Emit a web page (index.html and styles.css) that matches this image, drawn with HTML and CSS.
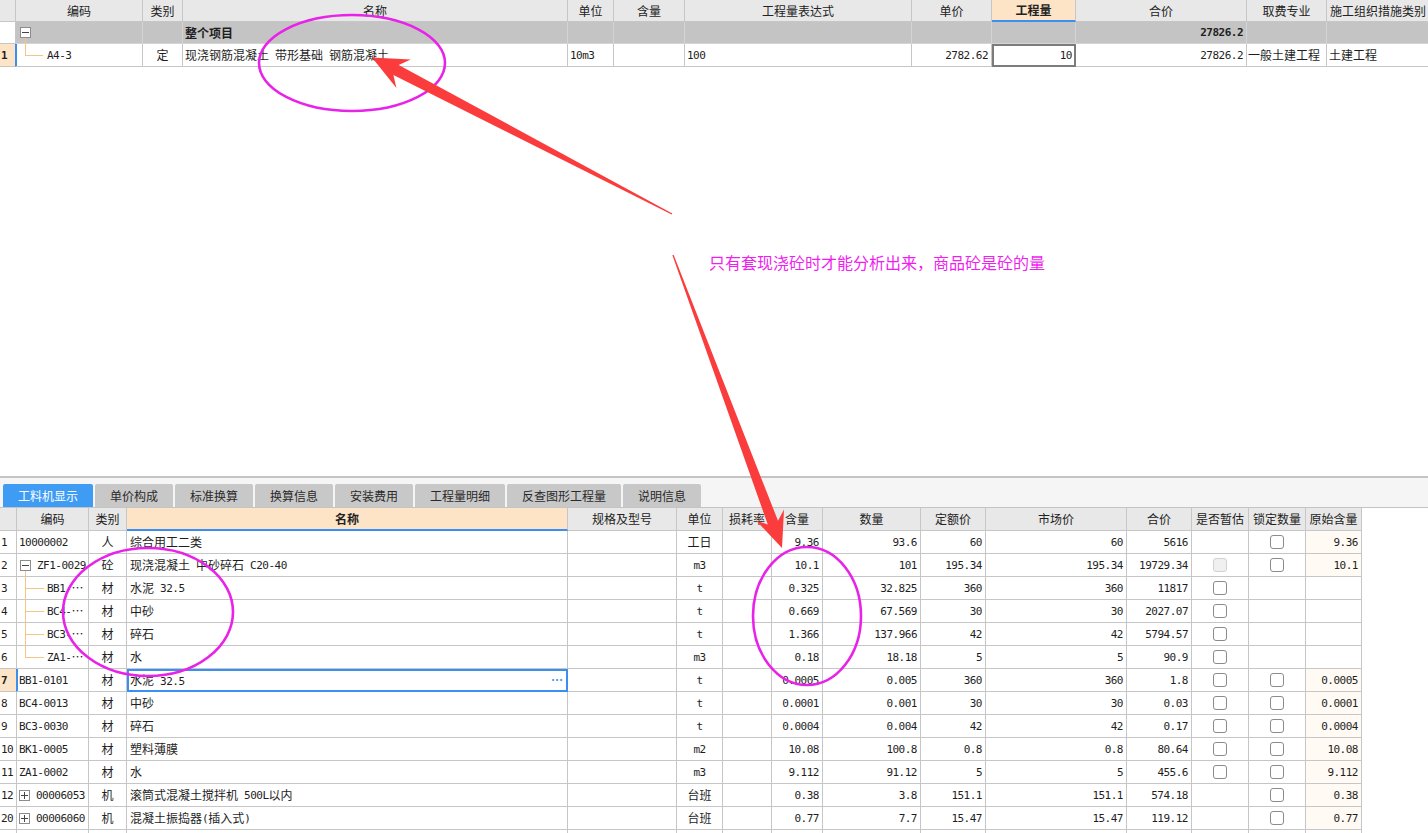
FILE: index.html
```html
<!DOCTYPE html>
<html lang="zh-CN">
<head>
<meta charset="utf-8">
<title>工料机显示</title>
<link rel="stylesheet" href="styles.css">
</head>
<body>
<div class="top">
  <div class="row trow thead">
    <div class="c"></div>
    <div class="c">编码</div>
    <div class="c">类别</div>
    <div class="c">名称</div>
    <div class="c">单位</div>
    <div class="c">含量</div>
    <div class="c">工程量表达式</div>
    <div class="c">单价</div>
    <div class="c act">工程量</div>
    <div class="c">合价</div>
    <div class="c">取费专业</div>
    <div class="c lastcol">施工组织措施类别</div>
  </div>
  <div class="row trow grp">
    <div class="c rn"></div>
    <div class="c tparent"><span class="box"></span></div>
    <div class="c"></div>
    <div class="c b">整个项目</div>
    <div class="c"></div>
    <div class="c"></div>
    <div class="c"></div>
    <div class="c"></div>
    <div class="c"></div>
    <div class="c n b">27826.2</div>
    <div class="c"></div>
    <div class="c"></div>
  </div>
  <div class="row trow tr1">
    <div class="c rn cur">1</div>
    <div class="c tleaf selrow"><span class="m">A4-3</span></div>
    <div class="c ctr">定</div>
    <div class="c">现浇钢筋混凝土&ensp;带形基础&ensp;钢筋混凝土</div>
    <div class="c"><span class="m">10m3</span></div>
    <div class="c"></div>
    <div class="c"><span class="m">100</span></div>
    <div class="c n">2782.62</div>
    <div class="c n focus">10</div>
    <div class="c n">27826.2</div>
    <div class="c tight">一般土建工程</div>
    <div class="c">土建工程</div>
  </div>
</div>

<div class="bottom">
  <div class="tabs">
    <div class="tab on">工料机显示</div>
    <div class="tab">单价构成</div>
    <div class="tab">标准换算</div>
    <div class="tab">换算信息</div>
    <div class="tab">安装费用</div>
    <div class="tab">工程量明细</div>
    <div class="tab">反查图形工程量</div>
    <div class="tab">说明信息</div>
  </div>
  <div class="grid">
    <div class="row brow bhead">
      <div class="c"></div>
      <div class="c">编码</div>
      <div class="c">类别</div>
      <div class="c act">名称</div>
      <div class="c">规格及型号</div>
      <div class="c">单位</div>
      <div class="c">损耗率</div>
      <div class="c">含量</div>
      <div class="c">数量</div>
      <div class="c">定额价</div>
      <div class="c">市场价</div>
      <div class="c">合价</div>
      <div class="c">是否暂估</div>
      <div class="c">锁定数量</div>
      <div class="c">原始含量</div>
    </div>

    <div class="row brow">
      <div class="c rn">1</div>
      <div class="c cd"><span class="m">10000002</span></div>
      <div class="c ctr">人</div>
      <div class="c nm">综合用工二类</div>
      <div class="c"></div>
      <div class="c ctr">工日</div>
      <div class="c"></div>
      <div class="c n">9.36</div>
      <div class="c n">93.6</div>
      <div class="c n">60</div>
      <div class="c n">60</div>
      <div class="c n">5616</div>
      <div class="c ctr"></div>
      <div class="c ctr"><span class="cb"></span></div>
      <div class="c n cream">9.36</div>
    </div>

    <div class="row brow">
      <div class="c rn">2</div>
      <div class="c cd bparent"><span class="box"></span><span class="m">ZF1-0029</span></div>
      <div class="c ctr">砼</div>
      <div class="c nm">现浇混凝土&ensp;中砂碎石&ensp;<span class="m">C20-40</span></div>
      <div class="c"></div>
      <div class="c ctr"><span class="m">m3</span></div>
      <div class="c"></div>
      <div class="c n">10.1</div>
      <div class="c n">101</div>
      <div class="c n">195.34</div>
      <div class="c n">195.34</div>
      <div class="c n">19729.34</div>
      <div class="c ctr"><span class="cb dis"></span></div>
      <div class="c ctr"><span class="cb"></span></div>
      <div class="c n cream">10.1</div>
    </div>

    <div class="row brow">
      <div class="c rn">3</div>
      <div class="c cd bleaf"><span class="m">BB1-</span><span class="ell">…</span></div>
      <div class="c ctr">材</div>
      <div class="c nm">水泥&ensp;<span class="m">32.5</span></div>
      <div class="c"></div>
      <div class="c ctr"><span class="m">t</span></div>
      <div class="c"></div>
      <div class="c n">0.325</div>
      <div class="c n">32.825</div>
      <div class="c n">360</div>
      <div class="c n">360</div>
      <div class="c n">11817</div>
      <div class="c ctr"><span class="cb"></span></div>
      <div class="c ctr"></div>
      <div class="c"></div>
    </div>

    <div class="row brow">
      <div class="c rn">4</div>
      <div class="c cd bleaf"><span class="m">BC4-</span><span class="ell">…</span></div>
      <div class="c ctr">材</div>
      <div class="c nm">中砂</div>
      <div class="c"></div>
      <div class="c ctr"><span class="m">t</span></div>
      <div class="c"></div>
      <div class="c n">0.669</div>
      <div class="c n">67.569</div>
      <div class="c n">30</div>
      <div class="c n">30</div>
      <div class="c n">2027.07</div>
      <div class="c ctr"><span class="cb"></span></div>
      <div class="c ctr"></div>
      <div class="c"></div>
    </div>

    <div class="row brow">
      <div class="c rn">5</div>
      <div class="c cd bleaf"><span class="m">BC3-</span><span class="ell">…</span></div>
      <div class="c ctr">材</div>
      <div class="c nm">碎石</div>
      <div class="c"></div>
      <div class="c ctr"><span class="m">t</span></div>
      <div class="c"></div>
      <div class="c n">1.366</div>
      <div class="c n">137.966</div>
      <div class="c n">42</div>
      <div class="c n">42</div>
      <div class="c n">5794.57</div>
      <div class="c ctr"><span class="cb"></span></div>
      <div class="c ctr"></div>
      <div class="c"></div>
    </div>

    <div class="row brow">
      <div class="c rn">6</div>
      <div class="c cd bleaf last"><span class="m">ZA1-</span><span class="ell">…</span></div>
      <div class="c ctr">材</div>
      <div class="c nm">水</div>
      <div class="c"></div>
      <div class="c ctr"><span class="m">m3</span></div>
      <div class="c"></div>
      <div class="c n">0.18</div>
      <div class="c n">18.18</div>
      <div class="c n">5</div>
      <div class="c n">5</div>
      <div class="c n">90.9</div>
      <div class="c ctr"><span class="cb"></span></div>
      <div class="c ctr"></div>
      <div class="c"></div>
    </div>

    <div class="row brow">
      <div class="c rn cur">7</div>
      <div class="c cd selrow"><span class="m">BB1-0101</span></div>
      <div class="c ctr">材</div>
      <div class="c nm sel"><span>水泥&ensp;<span class="m">32.5</span></span><span class="dots">…</span></div>
      <div class="c"></div>
      <div class="c ctr"><span class="m">t</span></div>
      <div class="c"></div>
      <div class="c n">0.0005</div>
      <div class="c n">0.005</div>
      <div class="c n">360</div>
      <div class="c n">360</div>
      <div class="c n">1.8</div>
      <div class="c ctr"><span class="cb"></span></div>
      <div class="c ctr"><span class="cb"></span></div>
      <div class="c n cream">0.0005</div>
    </div>

    <div class="row brow">
      <div class="c rn">8</div>
      <div class="c cd"><span class="m">BC4-0013</span></div>
      <div class="c ctr">材</div>
      <div class="c nm">中砂</div>
      <div class="c"></div>
      <div class="c ctr"><span class="m">t</span></div>
      <div class="c"></div>
      <div class="c n">0.0001</div>
      <div class="c n">0.001</div>
      <div class="c n">30</div>
      <div class="c n">30</div>
      <div class="c n">0.03</div>
      <div class="c ctr"><span class="cb"></span></div>
      <div class="c ctr"><span class="cb"></span></div>
      <div class="c n cream">0.0001</div>
    </div>

    <div class="row brow">
      <div class="c rn">9</div>
      <div class="c cd"><span class="m">BC3-0030</span></div>
      <div class="c ctr">材</div>
      <div class="c nm">碎石</div>
      <div class="c"></div>
      <div class="c ctr"><span class="m">t</span></div>
      <div class="c"></div>
      <div class="c n">0.0004</div>
      <div class="c n">0.004</div>
      <div class="c n">42</div>
      <div class="c n">42</div>
      <div class="c n">0.17</div>
      <div class="c ctr"><span class="cb"></span></div>
      <div class="c ctr"><span class="cb"></span></div>
      <div class="c n cream">0.0004</div>
    </div>

    <div class="row brow">
      <div class="c rn">10</div>
      <div class="c cd"><span class="m">BK1-0005</span></div>
      <div class="c ctr">材</div>
      <div class="c nm">塑料薄膜</div>
      <div class="c"></div>
      <div class="c ctr"><span class="m">m2</span></div>
      <div class="c"></div>
      <div class="c n">10.08</div>
      <div class="c n">100.8</div>
      <div class="c n">0.8</div>
      <div class="c n">0.8</div>
      <div class="c n">80.64</div>
      <div class="c ctr"><span class="cb"></span></div>
      <div class="c ctr"><span class="cb"></span></div>
      <div class="c n cream">10.08</div>
    </div>

    <div class="row brow">
      <div class="c rn">11</div>
      <div class="c cd"><span class="m">ZA1-0002</span></div>
      <div class="c ctr">材</div>
      <div class="c nm">水</div>
      <div class="c"></div>
      <div class="c ctr"><span class="m">m3</span></div>
      <div class="c"></div>
      <div class="c n">9.112</div>
      <div class="c n">91.12</div>
      <div class="c n">5</div>
      <div class="c n">5</div>
      <div class="c n">455.6</div>
      <div class="c ctr"><span class="cb"></span></div>
      <div class="c ctr"><span class="cb"></span></div>
      <div class="c n cream">9.112</div>
    </div>

    <div class="row brow">
      <div class="c rn">12</div>
      <div class="c cd"><span class="box plus"></span><span class="m">00006053</span></div>
      <div class="c ctr">机</div>
      <div class="c nm">滚筒式混凝土搅拌机&ensp;<span class="m">500L</span>以内</div>
      <div class="c"></div>
      <div class="c ctr">台班</div>
      <div class="c"></div>
      <div class="c n">0.38</div>
      <div class="c n">3.8</div>
      <div class="c n">151.1</div>
      <div class="c n">151.1</div>
      <div class="c n">574.18</div>
      <div class="c ctr"></div>
      <div class="c ctr"><span class="cb"></span></div>
      <div class="c n cream">0.38</div>
    </div>

    <div class="row brow">
      <div class="c rn">20</div>
      <div class="c cd"><span class="box plus"></span><span class="m">00006060</span></div>
      <div class="c ctr">机</div>
      <div class="c nm">混凝土振捣器<span class="m">(</span>插入式<span class="m">)</span></div>
      <div class="c"></div>
      <div class="c ctr">台班</div>
      <div class="c"></div>
      <div class="c n">0.77</div>
      <div class="c n">7.7</div>
      <div class="c n">15.47</div>
      <div class="c n">15.47</div>
      <div class="c n">119.12</div>
      <div class="c ctr"></div>
      <div class="c ctr"><span class="cb"></span></div>
      <div class="c n cream">0.77</div>
    </div>

    <div class="row brow">
      <div class="c rn"></div>
      <div class="c"></div>
      <div class="c"></div>
      <div class="c"></div>
      <div class="c"></div>
      <div class="c"></div>
      <div class="c"></div>
      <div class="c"></div>
      <div class="c"></div>
      <div class="c"></div>
      <div class="c"></div>
      <div class="c"></div>
      <div class="c"></div>
      <div class="c"></div>
      <div class="c"></div>
    </div>
  </div>
</div>

<div class="note">只有套现浇砼时才能分析出来，商品砼是砼的量</div>

<svg class="ann" viewBox="0 0 1428 833" width="1428" height="833">
  <g fill="none" stroke="#e922e9" stroke-width="2.6">
    <ellipse cx="352" cy="63" rx="93" ry="48"/>
    <ellipse cx="148" cy="612" rx="85" ry="64"/>
    <ellipse cx="807" cy="616" rx="54" ry="69"/>
  </g>
  <g fill="#fb3c3c">
    <polygon points="672.3,213.5 398.7,64.9 410.8,59.6 372,57.5 396.4,88.0 393.4,75.1 671.7,214.5"/>
    <polygon points="672.4,255.2 767.8,524.5 756.0,520.5 782,548 784.0,509.5 778.0,520.8 673.6,254.8"/>
  </g>
</svg>
</body>
</html>
```

FILE: styles.css
```css
* { box-sizing: border-box; margin: 0; padding: 0; }
html, body { width: 1428px; height: 833px; overflow: hidden; }
body {
  position: relative;
  background: #fff;
  font-family: "Noto Sans CJK SC", "Noto Sans", sans-serif;
  font-size: 12px;
  color: #1e1e1e;
}

.row { display: grid; }
.c {
  display: flex;
  align-items: center;
  padding: 0 2px;
  border-right: 1px solid #c6c6c6;
  border-bottom: 1px solid #c6c6c6;
  white-space: nowrap;
  overflow: hidden;
  line-height: 1;
}
.m, .n, .rn {
  font-family: "DejaVu Sans Mono", "Liberation Mono", monospace;
  font-size: 11px;
  letter-spacing: -0.5px;
}
.n { justify-content: flex-end; padding-right: 3px; }
.ctr { justify-content: center; }
.b { font-weight: bold; }
.ell { font-family: "Noto Sans CJK SC", sans-serif; font-size: 12px; }

/* top table */
.top { height: 476px; background: #fff; }
.trow {
  grid-template-columns: 16px 127px 40px 385px 46px 71px 227px 80px 84px 171px 80px 120px;
  width: 1447px;
}
.thead { height: 22px; }
.thead .c { background: #e8e8e8; justify-content: center; color: #222; }
.thead .lastcol { justify-content: flex-start; padding-left: 3px; }
.c.act {
  background: #fde4c6;
  font-weight: bold;
  border-bottom: 2px solid #3b8ff0;
}
.grp { height: 22px; }
.grp .c { background: #c4c4c4; border-color: #d4d4d4; }
.grp .c.rn { background: #fff; border-color: #c6c6c6; }
.tr1 { height: 23px; }
.tight { padding-left: 1px; }

.rn { padding: 0 0 0 1px; }
.c.cur { background: #fde4c6; font-weight: bold; border-right-color: #3b8ff0; }
.selrow { box-shadow: inset 1px 0 0 #3b8ff0; }
.focus { outline: 2px solid #7c7c7c; outline-offset: -2px; }

.box {
  position: relative;
  flex: none;
  width: 11px;
  height: 11px;
  border: 1px solid #8c8c8c;
  background: #fff;
  margin-right: 6px;
}
.box::before {
  content: "";
  position: absolute;
  left: 1px; right: 1px; top: 4px;
  height: 1px;
  background: #444;
}
.box.plus::after {
  content: "";
  position: absolute;
  top: 1px; bottom: 1px; left: 4px;
  width: 1px;
  background: #444;
}

.tparent { position: relative; overflow: visible; padding-left: 4px; }
.tparent::before {
  content: "";
  position: absolute;
  left: 9px; top: 16px; bottom: -1px;
  width: 1px;
  background: #f5c585;
}
.tleaf { position: relative; overflow: visible; padding-left: 31px; }
.tleaf::before {
  content: "";
  position: absolute;
  left: 9px; top: -1px;
  height: calc(50% + 1px);
  width: 1px;
  background: #f5c585;
}
.tleaf::after {
  content: "";
  position: absolute;
  left: 9px; top: 50%;
  width: 18px; height: 1px;
  background: #f5c585;
}

/* bottom panel */
.bottom { height: 357px; border-top: 2px solid #c4c4c4; background: #f5f5f5; }
.tabs {
  display: flex;
  gap: 2px;
  height: 30px;
  padding: 6px 0 0 3px;
  border-bottom: 1px solid #c4c4c4;
}
.tab {
  display: flex;
  align-items: center;
  height: 23px;
  padding: 0 15px;
  background: #c8c8c8;
  border-radius: 2px 2px 0 0;
  color: #2a2a2a;
}
.tab.on { background: #3e9cf4; color: #fff; }

.grid { height: 325px; background: #fff; }
.brow {
  grid-template-columns: 17px 72px 38px 441px 109px 46px 49px 51px 98px 65px 141px 65px 57px 57px 56px;
  width: 1362px;
  height: 23px;
}
.bhead { height: 23px; }
.bhead .c { background: #e8e8e8; justify-content: center; color: #222; }
.bhead .c.act { background: #fde4c6; }

.cd { padding-left: 2px; }
.nm { padding-left: 3px; }
.cream { background: #fffaf3; }

.bparent { position: relative; overflow: visible; padding-left: 3px; }
.bparent::before {
  content: "";
  position: absolute;
  left: 8px; top: 17px; bottom: -1px;
  width: 1px;
  background: #f5c585;
}
.bleaf { position: relative; overflow: visible; padding-left: 30px; }
.bleaf::before {
  content: "";
  position: absolute;
  left: 8px; top: -1px; bottom: -1px;
  width: 1px;
  background: #f5c585;
}
.bleaf.last::before { bottom: auto; height: 12px; }
.bleaf::after {
  content: "";
  position: absolute;
  left: 8px; top: 11px;
  width: 19px; height: 1px;
  background: #f5c585;
}

.sel {
  justify-content: space-between;
  outline: 2px solid #3b8ff0;
  outline-offset: -2px;
}
.dots { color: #3b8ff0; font-weight: bold; margin-right: 2px; }

.cb {
  display: block;
  width: 14px;
  height: 14px;
  border: 1px solid #8b8b8b;
  border-radius: 3px;
  background: #fff;
}
.cb.dis { background: #f0f0f0; border-color: #d2d2d2; }

/* annotations */
.note {
  position: absolute;
  left: 709px;
  top: 254px;
  font-size: 16px;
  line-height: 16px;
  color: #ef1fef;
  white-space: nowrap;
}
.ann {
  position: absolute;
  left: 0;
  top: 0;
  pointer-events: none;
}
```
